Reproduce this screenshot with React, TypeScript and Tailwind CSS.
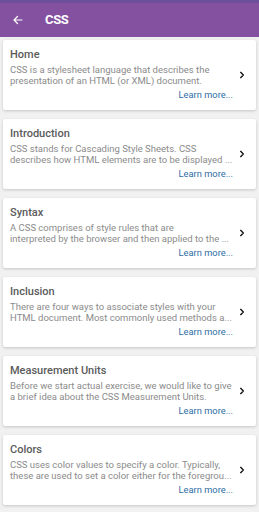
import React from "react";

const items = [
  {
    title: "Home",
    l1: "CSS is a stylesheet language that describes the",
    l2: "presentation of an HTML (or XML) document.",
  },
  {
    title: "Introduction",
    l1: "CSS stands for Cascading Style Sheets. CSS",
    l2: "describes how HTML elements are to be displayed ...",
  },
  {
    title: "Syntax",
    l1: "A CSS comprises of style rules that are",
    l2: "interpreted by the browser and then applied to the ...",
  },
  {
    title: "Inclusion",
    l1: "There are four ways to associate styles with your",
    l2: "HTML document. Most commonly used methods a...",
  },
  {
    title: "Measurement Units",
    l1: "Before we start actual exercise, we would like to give",
    l2: "a brief idea about the CSS Measurement Units.",
  },
  {
    title: "Colors",
    l1: "CSS uses color values to specify a color. Typically,",
    l2: "these are used to set a color either for the foregrou...",
  },
];

export default function App() {
  return (
    <div
      className="w-[259px] h-[512px] overflow-hidden bg-[#f1f1f1] flex flex-col"
      style={{ fontFamily: "Roboto, 'Noto Sans', sans-serif" }}
    >
      <div className="h-[3px] bg-[#6c4f9b] shrink-0" />
      <div className="h-[34px] bg-[#8450a0] flex items-center shrink-0">
        <svg width="12" height="12" viewBox="0 0 24 24" className="ml-[12px]" fill="none" stroke="white" strokeWidth="2.4" strokeLinecap="round" strokeLinejoin="round">
          <path d="M20 12H4M11 5l-7 7 7 7" />
        </svg>
        <span className="ml-[21px] text-white text-[13px] font-bold tracking-tight">CSS</span>
      </div>
      <div className="flex flex-col gap-[9px] px-[3px] pt-[3px]">
        {items.map((it) => (
          <div
            key={it.title}
            className="h-[70px] bg-white rounded-[2px] shadow-[0_1px_3px_rgba(0,0,0,0.18)] flex items-center pl-[7px] pr-[10px] shrink-0"
          >
            <div className="flex flex-col w-[223px] min-w-0 pt-[8px] pb-[9px]">
              <div className="text-[11px] leading-[14px] font-medium text-[#5b5b5b]">{it.title}</div>
              <div className="mt-[2px] text-[9.5px] leading-[11px] text-[#8b8b8b] whitespace-nowrap">{it.l1}</div>
              <div className="text-[9.5px] leading-[11px] text-[#8b8b8b] whitespace-nowrap">{it.l2}</div>
              <div className="mt-[3px] text-[9.3px] leading-[12px] text-[#2e6ea5] text-right">Learn more...</div>
            </div>
            <svg width="8" height="8" viewBox="0 0 24 24" className="ml-auto shrink-0" fill="none" stroke="#111" strokeWidth="4" strokeLinecap="round" strokeLinejoin="round">
              <path d="M8 4l8 8-8 8" />
            </svg>
          </div>
        ))}
      </div>
    </div>
  );
}
